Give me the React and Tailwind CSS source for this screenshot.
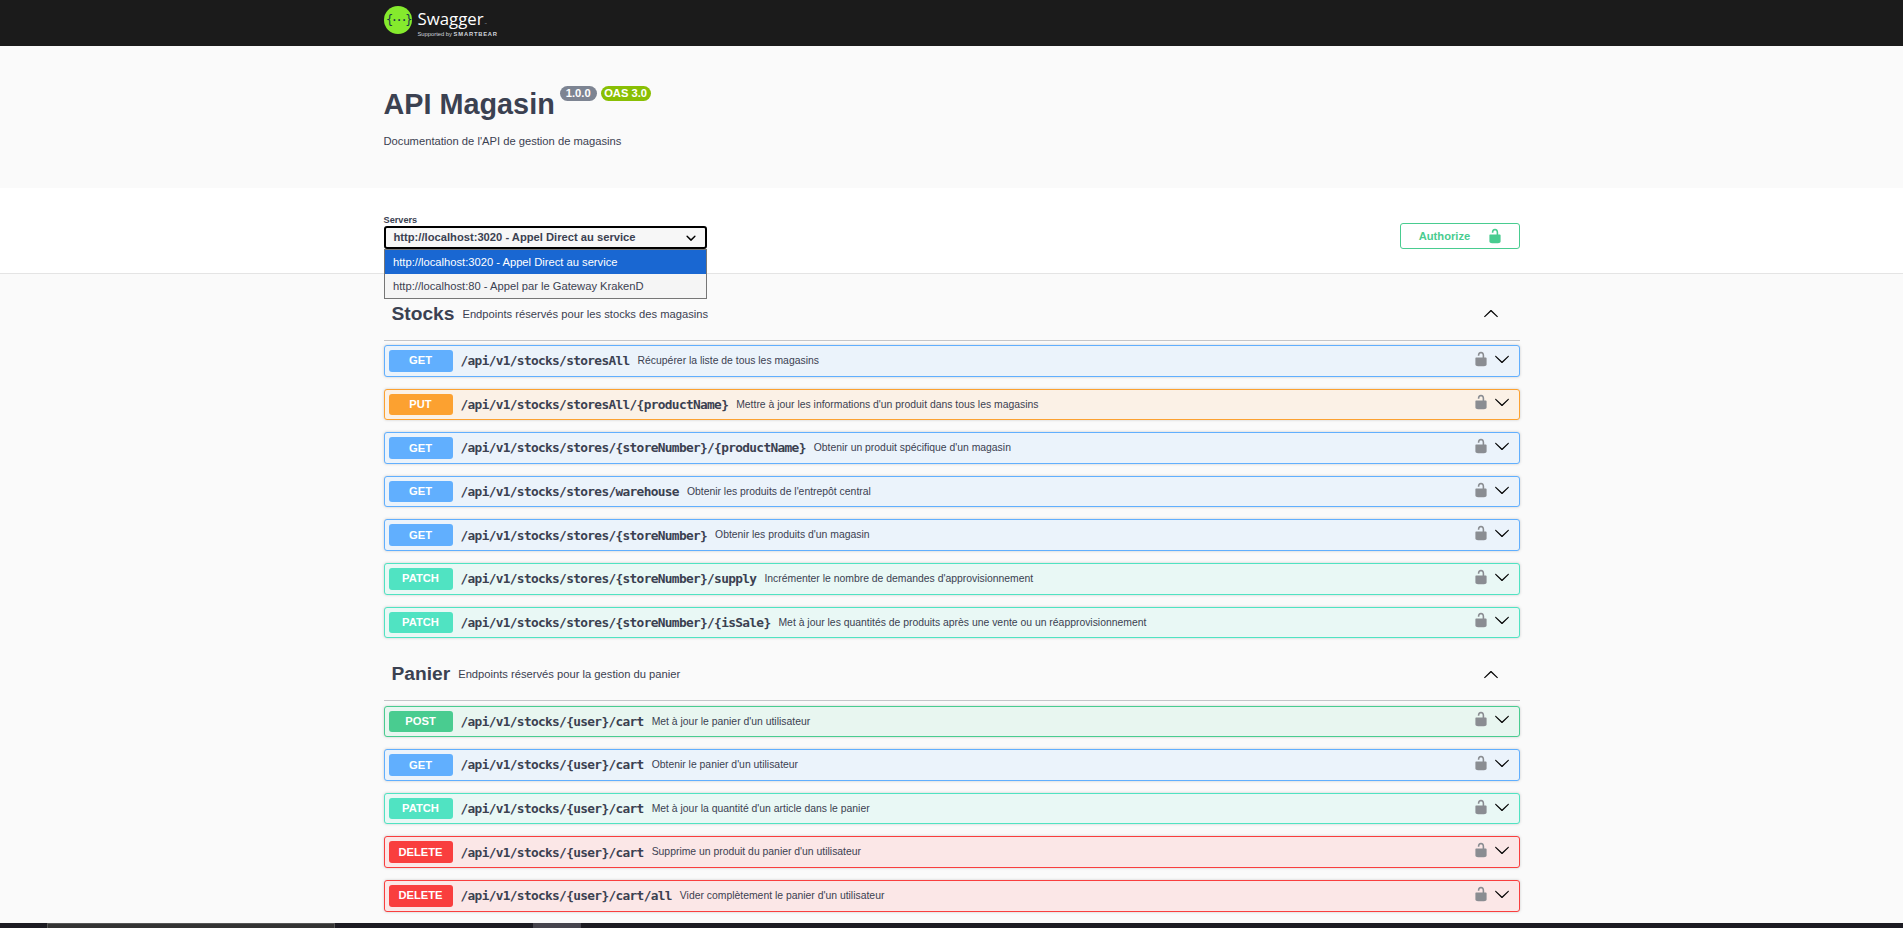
const SANS = "font-['Liberation_Sans',Arial,sans-serif]";

const METHODS = {
  GET: { border: "border-[#61affe]", bg: "bg-[#ebf3fb]", badge: "bg-[#61affe]" },
  PUT: { border: "border-[#fca130]", bg: "bg-[#fbf1e6]", badge: "bg-[#fca130]" },
  POST: { border: "border-[#49cc90]", bg: "bg-[#e8f6f0]", badge: "bg-[#49cc90]" },
  PATCH: { border: "border-[#50e3c2]", bg: "bg-[#e9f8f5]", badge: "bg-[#50e3c2]" },
  DELETE: { border: "border-[#f93e3e]", bg: "bg-[#fbe7e7]", badge: "bg-[#f93e3e]" },
};

const STOCKS = [
  ["GET", "/api/v1/stocks/storesAll", "Récupérer la liste de tous les magasins"],
  ["PUT", "/api/v1/stocks/storesAll/{productName}", "Mettre à jour les informations d'un produit dans tous les magasins"],
  ["GET", "/api/v1/stocks/stores/{storeNumber}/{productName}", "Obtenir un produit spécifique d'un magasin"],
  ["GET", "/api/v1/stocks/stores/warehouse", "Obtenir les produits de l'entrepôt central"],
  ["GET", "/api/v1/stocks/stores/{storeNumber}", "Obtenir les produits d'un magasin"],
  ["PATCH", "/api/v1/stocks/stores/{storeNumber}/supply", "Incrémenter le nombre de demandes d'approvisionnement"],
  ["PATCH", "/api/v1/stocks/stores/{storeNumber}/{isSale}", "Met à jour les quantités de produits après une vente ou un réapprovisionnement"],
];

const PANIER = [
  ["POST", "/api/v1/stocks/{user}/cart", "Met à jour le panier d'un utilisateur"],
  ["GET", "/api/v1/stocks/{user}/cart", "Obtenir le panier d'un utilisateur"],
  ["PATCH", "/api/v1/stocks/{user}/cart", "Met à jour la quantité d'un article dans le panier"],
  ["DELETE", "/api/v1/stocks/{user}/cart", "Supprime un produit du panier d'un utilisateur"],
  ["DELETE", "/api/v1/stocks/{user}/cart/all", "Vider complètement le panier d'un utilisateur"],
];

const Lock = ({ className }) => (
  <svg viewBox="0 0 20 20" className={className} fill="currentColor">
    <path d="M15.8 8H14V5.6C14 2.703 12.665 1 10 1 7.334 1 6 2.703 6 5.6V6h2v-.801C8 3.754 8.797 3 10 3c1.203 0 2 .754 2 2.199V8H4c-.553 0-1 .646-1 1.199V17c0 .549.428 1.139.951 1.307l1.197.387C5.672 18.861 6.55 19 7.1 19h5.8c.549 0 1.428-.139 1.951-.307l1.196-.387c.524-.167.953-.757.953-1.306V9.199C17 8.646 16.352 8 15.8 8z" />
  </svg>
);

const Chevron = ({ className }) => (
  <svg viewBox="0 0 20 20" className={className} fill="currentColor">
    <path d="M17.418 6.109c.272-.268.709-.268.979 0s.271.701 0 .969l-7.908 7.83c-.27.268-.707.268-.979 0l-7.908-7.83c-.27-.268-.27-.701 0-.969.271-.268.709-.268.979 0L10 13.25l7.418-7.141z" />
  </svg>
);

const SelectArrow = () => (
  <svg viewBox="0 0 20 20" className="h-5 w-5 shrink-0 text-black" fill="currentColor">
    <path d="M13.418 7.859a.695.695 0 0 1 .978 0 .68.68 0 0 1 0 .969l-3.908 3.83a.697.697 0 0 1-.979 0l-3.908-3.83a.68.68 0 0 1 0-.969.695.695 0 0 1 .978 0L10 11z" />
  </svg>
);

const Operation = ({ method, path, summary }) => {
  const m = METHODS[method];
  return (
    <div className={`mb-3 flex h-[31.6px] items-center rounded-[3px] border pl-1 pr-[9px] shadow-[0_0_3px_rgba(0,0,0,0.19)] ${m.border} ${m.bg}`}>
      <div className={`flex h-[21.6px] w-16 shrink-0 items-center justify-center rounded-[3px] text-[11.2px] font-bold text-white ${m.badge}`}>
        {method}
      </div>
      <span className="ml-2 whitespace-nowrap font-['DejaVu_Sans_Mono',monospace] text-[12.8px] font-semibold tracking-[-0.66px] text-[#3b4151]">
        {path}
      </span>
      <span className="ml-2 flex-1 whitespace-nowrap text-[10.4px] text-[#3b4151]">{summary}</span>
      <Lock className="-mt-1 h-4 w-4 text-[#8a8d92]" />
      <Chevron className="-mt-1 ml-[5px] h-4 w-4 text-black" />
    </div>
  );
};

const Section = ({ title, description, rows }) => (
  <section className="mb-4">
    <div className="mb-[4.4px] flex h-[47px] items-center border-b border-[#c4c5c8] pb-[5px] pl-2 pr-[21px] text-[#3b4151]">
      <span className="text-[19.2px] font-bold">{title}</span>
      <span className="ml-2 flex-1 text-[11.2px]">{description}</span>
      <Chevron className="h-4 w-4 rotate-180 text-black" />
    </div>
    {rows.map((r, i) => (
      <Operation key={i} method={r[0]} path={r[1]} summary={r[2]} />
    ))}
  </section>
);

const App = () => {
  return (
    <div className={`relative h-[928px] overflow-hidden bg-[#fafafa] ${SANS}`}>
      {/* Topbar */}
      <div className="h-[46px] bg-[#1b1b1b]">
        <div className="mx-auto flex w-[1136px] items-start pt-[6px]">
          <svg viewBox="0 0 28 28" className="h-7 w-7 shrink-0">
            <circle cx="14" cy="14" r="14" fill="#85ea2d" />
            <text x="14" y="18" textAnchor="middle" fontSize="12" fontWeight="400" letterSpacing="-2.4" fill="#173647" fontFamily="'DejaVu Sans Mono',monospace">{"{···}"}</text>
          </svg>
          <div className="ml-1.5 flex flex-col pt-[3px] text-white">
            <span className="font-['Open_Sans',sans-serif] text-[16.8px] leading-[20px]">
              Swagger<span className="ml-px text-[3px] text-gray-400">™</span>
            </span>
            <span className="mt-[-3px] whitespace-nowrap text-[5.8px] leading-[7px] text-gray-300">Supported by <b className="tracking-[0.8px]">SMARTBEAR</b></span>
          </div>
        </div>
      </div>

      {/* Info */}
      <div className="h-[142px]">
        <div className="mx-auto w-[1136px] pt-10 text-[#3b4151]">
          <div className="flex items-start">
            <h1 className="text-[28.8px] font-bold leading-[36px]">API Magasin</h1>
            <span className="ml-[5px] h-[15px] rounded-full bg-[#7d8492] px-[6px] text-[11.2px] font-bold leading-[15px] text-white">1.0.0</span>
            <span className="ml-1 h-[15px] rounded-full bg-[#89bf04] px-[3.5px] text-[11.2px] font-bold leading-[15px] text-white">OAS 3.0</span>
          </div>
          <p className="mt-[11px] text-[11.2px]">Documentation de l'API de gestion de magasins</p>
        </div>
      </div>

      {/* Servers */}
      <div className="h-[86px] border-b border-[#e4e4e4] bg-white">
        <div className="mx-auto flex w-[1136px] items-start justify-between pt-[27px]">
          <div>
            <div className="text-[9.2px] font-bold leading-[11px] text-[#3b4151]">Servers</div>
            <div className="flex h-[23px] w-[323px] items-center justify-between rounded-[3px] border-2 border-black bg-[#f7f7f7] pl-2 pr-1 text-[11.2px] font-bold text-[#3b4151]">
              http://localhost:3020 - Appel Direct au service
              <SelectArrow />
            </div>
          </div>
          <div className="mt-2 flex h-[26px] w-[120px] items-center justify-center gap-[17px] rounded-[3px] border-[1.6px] border-[#49cc90] pl-[3px] text-[11.2px] font-bold text-[#49cc90]">
            Authorize
            <Lock className="h-4 w-4" />
          </div>
        </div>
      </div>

      {/* Operations */}
      <div className="mx-auto w-[1136px] pt-[19.6px]">
        <Section title="Stocks" description="Endpoints réservés pour les stocks des magasins" rows={STOCKS} />
        <Section title="Panier" description="Endpoints réservés pour la gestion du panier" rows={PANIER} />
      </div>

      {/* Select dropdown */}
      <div className="absolute left-[384px] top-[249px] z-10 w-[323px] border border-[#767676] bg-[#f5f5f5] text-[11.2px] text-[#3b4151]">
        <div className="flex h-6 items-center bg-[#1967d2] px-2 text-white">http://localhost:3020 - Appel Direct au service</div>
        <div className="flex h-6 items-center px-2">http://localhost:80 - Appel par le Gateway KrakenD</div>
      </div>

      {/* Bottom strip */}
      <div className="absolute inset-x-0 bottom-0 flex h-[5px] bg-[#1c1b22]">
        <div className="ml-[47px] w-[288px] border-x border-t border-[#555] bg-[#333]" />
        <div className="ml-[198px] w-[48px] bg-[#45434c]" />
      </div>
    </div>
  );
};

export default App;
